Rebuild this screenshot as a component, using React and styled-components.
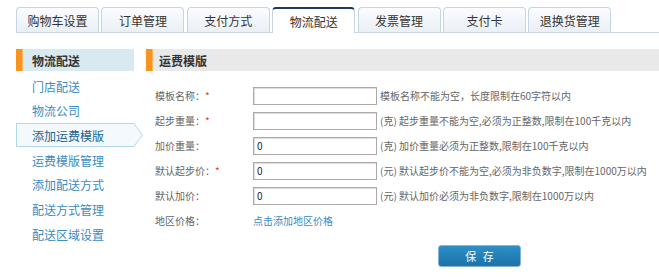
import React from 'react'
import styled, { createGlobalStyle } from 'styled-components'

const GlobalStyle = createGlobalStyle`
  html, body {
    margin: 0;
    padding: 0;
    background: #fff;
    font-family: "Noto Sans CJK SC", "Liberation Sans", sans-serif;
  }
`

const tabs = ['购物车设置', '订单管理', '支付方式', '物流配送', '发票管理', '支付卡', '退换货管理']

const menu = [
  { label: '门店配送' },
  { label: '物流公司' },
  { label: '添加运费模版', active: true },
  { label: '运费模版管理' },
  { label: '添加配送方式' },
  { label: '配送方式管理' },
  { label: '配送区域设置' },
]

const rows = [
  { label: '模板名称', required: true, value: '', hint: '模板名称不能为空，长度限制在60字符以内' },
  { label: '起步重量', required: true, value: '', hint: '(克) 起步重量不能为空,必须为正整数,限制在100千克以内' },
  { label: '加价重量', value: '0', hint: '(克) 加价重量必须为正整数,限制在100千克以内' },
  { label: '默认起步价', required: true, value: '0', hint: '(元) 默认起步价不能为空,必须为非负数字,限制在1000万以内' },
  { label: '默认加价', value: '0', hint: '(元) 默认加价必须为非负数字,限制在1000万以内' },
]

function App() {
  return (
    <Page>
      <GlobalStyle />
      <TabBar>
        {tabs.map((t) => (
          <Tab key={t} $active={t === '物流配送'}>{t}</Tab>
        ))}
      </TabBar>
      <Body>
        <Sidebar>
          <SectionTitle>物流配送</SectionTitle>
          {menu.map((m) => (
            <MenuItem key={m.label} $active={m.active}>{m.label}</MenuItem>
          ))}
        </Sidebar>
        <Main>
          <SectionTitle $gray>运费模版</SectionTitle>
          <Form>
            {rows.map((r) => (
              <React.Fragment key={r.label}>
                <Label>
                  {r.label}：{r.required && <Star>*</Star>}
                </Label>
                <Input defaultValue={r.value} />
                <Hint>{r.hint}</Hint>
              </React.Fragment>
            ))}
            <Label>地区价格：</Label>
            <Link>点击添加地区价格</Link>
            <span />
          </Form>
          <SaveButton>保 存</SaveButton>
        </Main>
      </Body>
    </Page>
  )
}

export default App

const Page = styled.div`
  width: 659px;
  height: 278px;
  padding: 7px 0 0 16px;
  box-sizing: border-box;
  overflow: hidden;
`

const TabBar = styled.div`
  display: flex;
  gap: 2.4px;
  height: 25px;
  border-bottom: 1px solid #c9d8e5;
`

const Tab = styled.div`
  width: 83px;
  height: ${(p) => (p.$active ? '26px' : '25px')};
  box-sizing: border-box;
  display: flex;
  align-items: center;
  justify-content: center;
  font-size: 12px;
  color: #333;
  border: 1px solid #c6d5e2;
  border-bottom: none;
  border-top: ${(p) => (p.$active ? '2px solid #1e3a5c' : '1px solid #c6d5e2')};
  border-radius: 4px 4px 0 0;
  background: ${(p) => (p.$active ? '#fff' : 'linear-gradient(#fbfcfe, #e9f0f6)')};
  position: relative;
  z-index: ${(p) => (p.$active ? 1 : 0)};
`

const Body = styled.div`
  display: flex;
  gap: 12px;
  margin-top: 16px;
`

const Sidebar = styled.div`
  width: 118px;
  display: flex;
  flex-direction: column;
`

const SectionTitle = styled.div`
  height: 22px;
  display: flex;
  align-items: center;
  padding-left: ${(p) => (p.$gray ? '7px' : '10px')};
  font-size: 12px;
  font-weight: bold;
  color: #333;
  background: ${(p) => (p.$gray ? '#e9e9e9' : '#d9e9f2')};
  border-left: 6px solid #f7931e;
  box-shadow: inset 1px 0 0 #fbb85c;
  margin-bottom: ${(p) => (p.$gray ? '12px' : '3px')};
`

const MenuItem = styled.div`
  position: relative;
  height: 24px;
  box-sizing: border-box;
  display: flex;
  align-items: center;
  padding-left: 16px;
  font-size: 12px;
  margin-bottom: 0.7px;
  color: ${(p) => (p.$active ? '#22628f' : '#3a8cc2')};
  ${(p) =>
    p.$active &&
    `
    background: #f3f9fd;
    border: 1px solid #b2d7ec;
    border-right: none;
    padding-left: 15px;
    &::before, &::after {
      content: '';
      position: absolute;
      top: -1px;
      border-style: solid;
      border-color: transparent;
      border-width: 12px 0 12px 9px;
    }
    &::before {
      right: -9px;
      border-left-color: #b2d7ec;
    }
    &::after {
      right: -8px;
      border-left-color: #f3f9fd;
    }
  `}
`

const Main = styled.div`
  flex: 1;
  display: flex;
  flex-direction: column;
`

const Form = styled.div`
  display: grid;
  grid-template-columns: 98px 124px 1fr;
  grid-auto-rows: 25px;
  align-items: center;
  padding-left: 9px;
  font-size: 10px;
  color: #666;
`

const Label = styled.div`
  white-space: nowrap;
`

const Star = styled.span`
  color: #e83333;
`

const Input = styled.input`
  width: 124px;
  height: 18px;
  box-sizing: border-box;
  border: 1px solid #aaa;
  box-shadow: inset 1px 1px 1px #ddd;
  padding: 0 3px;
  font-family: inherit;
  font-size: 10px;
  color: #222;
  outline: none;
`

const Hint = styled.div`
  padding-left: 3px;
  white-space: nowrap;
`

const Link = styled.a`
  color: #3a8cc2;
  cursor: pointer;
`

const SaveButton = styled.button`
  margin: 12px 0 0 292px;
  width: 83px;
  height: 22px;
  border: 1px solid #86b4d8;
  border-radius: 3px;
  background: linear-gradient(#2f8fc7, #1a72a8);
  color: #fff;
  font-family: inherit;
  font-size: 11px;
  letter-spacing: 2px;
  padding: 0 0 0 2px;
  cursor: pointer;
`
